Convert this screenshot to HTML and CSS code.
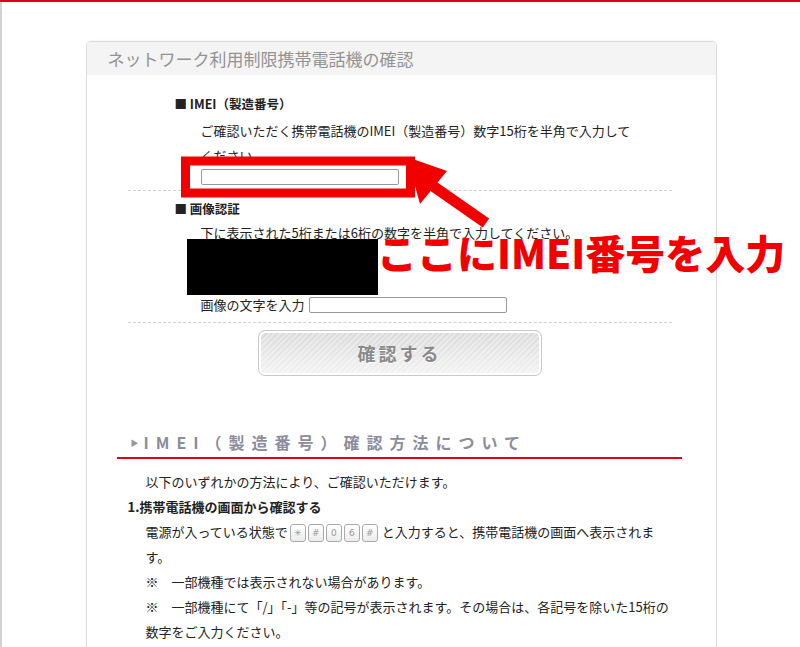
FILE: index.html
```html
<!DOCTYPE html>
<html lang="ja">
<head>
    <meta http-equiv="Content-Type" content="text/html; charset=utf-8" />
    <title>ネットワーク利用制限携帯電話機の確認</title>
    <link rel="stylesheet" href="styles.css">
</head>
<body>
    <div class="topbar"></div>
    <div class="page">
        <div class="card">
            <h1 class="card-head">ネットワーク利用制限携帯電話機の確認</h1>

            <form class="check-form" onsubmit="return false;">
                <div class="field">
                    <h2 class="field-title">■ IMEI（製造番号）</h2>
                    <p class="field-text">ご確認いただく携帯電話機のIMEI（製造番号）数字15桁を半角で入力してください</p>
                    <input class="imei-input" type="text">
                </div>
                <div class="field field-captcha">
                    <h2 class="field-title">■ 画像認証</h2>
                    <p class="field-text captcha-note">下に表示された5桁または6桁の数字を半角で入力してください。</p>
                    <div class="captcha"></div>
                    <div class="captcha-row">
                        <label for="captchaInput">画像の文字を入力</label>
                        <input id="captchaInput" class="captcha-input" type="text">
                    </div>
                </div>
                <div class="submit-row">
                    <button class="submit-btn" type="submit">確認する</button>
                </div>
            </form>

            <section class="howto">
                <h2 class="howto-title">IMEI（製造番号）確認方法について</h2>
                <p>以下のいずれかの方法により、ご確認いただけます。</p>
                <p class="howto-sub">1.携帯電話機の画面から確認する</p>
                <p>電源が入っている状態で<span class="key">&#x2733;</span><span class="key">#</span><span class="key">0</span><span class="key">6</span><span class="key key-last">#</span>と入力すると、携帯電話機の画面へ表示されます。</p>
                <p>※　一部機種では表示されない場合があります。</p>
                <p>※　一部機種にて「/」「-」等の記号が表示されます。その場合は、各記号を除いた15桁の数字をご入力ください。</p>
            </section>
        </div>
    </div>

    <!-- 注釈 -->
    <svg class="annot" width="800" height="647" viewBox="0 0 800 647">
        <rect x="185.5" y="161" width="225" height="32" fill="none" stroke="#f20000" stroke-width="9"/>
        <line x1="486" y1="223" x2="430" y2="184" stroke="#f20000" stroke-width="11"/>
        <polygon points="407,157 447,171 420,204" fill="#f20000"/>
    </svg>
    <div class="annot-text">ここにIMEI番号を入力</div>
</body>
</html>
```

FILE: styles.css
```css
body {
    margin: 0;
    background-color: #fff;
    color: #222;
    font-family: "Noto Sans CJK JP", sans-serif;
}

.topbar {
    height: 2px;
    background-color: #d9001b;
}

.page {
    border-left: 2px solid #d4d4d4;
    height: 645px;
    overflow: hidden;
}

.card {
    width: 629px;
    min-height: 700px;
    margin: 39px auto 0;
    border: 1px solid #dcdcdc;
    border-radius: 5px 5px 0 0;
    box-shadow: 0 -1px 2px rgba(0, 0, 0, 0.04);
}

.card-head {
    margin: 0;
    height: 33px;
    padding-left: 21px;
    line-height: 33px;
    font-size: 17px;
    font-weight: normal;
    color: #939393;
    background-color: #f4f4f4;
    border-radius: 4px 4px 0 0;
}

/* フォーム */
.check-form {
    margin: 0 44px 0 41px;
    padding-top: 16px;
}

.field {
    padding-bottom: 5px;
}

.field + .field {
    border-top: 1px dashed #cfcfcf;
    padding-top: 5px;
    padding-bottom: 9px;
}

.field-captcha + .submit-row {
    border-top: 1px dashed #cfcfcf;
}

.field-title {
    margin: 0;
    padding-left: 47px;
    font-size: 12.5px;
    font-weight: bold;
    line-height: 25px;
}

.field-text {
    width: 436px;
    margin: 2px 0 0;
    padding-left: 73px;
    font-size: 13px;
    line-height: 25px;
}

.imei-input,
.captcha-input {
    width: 198px;
    height: 16px;
    box-sizing: border-box;
    padding: 0;
    border: 1px solid #999;
    border-radius: 2px;
}

.imei-input {
    display: block;
    margin: 1px 0 0 73px;
}

.captcha-note {
    width: auto;
    margin-top: 3px;
    line-height: 18px;
}

.captcha {
    width: 191px;
    height: 56px;
    margin: -3px 0 0 59px;
    background-color: #000;
}

.captcha-row {
    display: flex;
    align-items: center;
    gap: 4px;
    height: 17px;
    margin: 1px 0 0 73px;
    font-size: 13px;
}

.submit-row {
    display: flex;
    justify-content: center;
    padding-top: 7px;
}

.submit-btn {
    width: 284px;
    height: 46px;
    border: 1px solid #c8c8c8;
    border-radius: 7px;
    box-shadow: inset 0 0 0 2px #fff;
    background:
        repeating-linear-gradient(135deg, rgba(255, 255, 255, 0.35) 0 2px, rgba(255, 255, 255, 0) 2px 4px),
        linear-gradient(#d9d9d9, #f3f3f3);
    font-family: "Noto Sans CJK JP", sans-serif;
    font-size: 18px;
    font-weight: bold;
    letter-spacing: 3px;
    color: #8a8a8a;
    text-shadow: 0 1px 0 #fff;
    cursor: pointer;
}

/* 確認方法 */
.howto {
    margin: 54px 34px 0 30px;
}

.howto-title {
    margin: 0 0 10px;
    padding: 0 0 2px 14px;
    border-bottom: 2px solid #e60012;
    font-size: 16px;
    font-weight: bold;
    line-height: 24px;
    letter-spacing: 7px;
    color: #8c8c9b;
}

.howto-title::before {
    content: "▶";
    margin-right: 5px;
    font-size: 8px;
    letter-spacing: 0;
    color: #999;
    vertical-align: 3px;
}

.howto p {
    margin: 0;
    padding-left: 29px;
    padding-right: 6px;
    font-size: 13px;
    line-height: 25px;
}

.howto .howto-sub {
    padding-left: 11px;
    font-weight: bold;
}

.key {
    display: inline-block;
    width: 14px;
    height: 16px;
    margin-left: 2px;
    border: 1px solid #aaa;
    border-radius: 3px;
    background: linear-gradient(#fff, #ececec);
    font-family: "DejaVu Sans", sans-serif;
    font-size: 9px;
    line-height: 16px;
    text-align: center;
    vertical-align: middle;
    color: #999;
}

.key-last {
    margin-right: 4px;
}

/* 注釈 */
.annot {
    position: absolute;
    top: 0;
    left: 0;
    pointer-events: none;
}

.annot-text {
    position: absolute;
    top: 232px;
    left: 377px;
    font-size: 40px;
    font-weight: 900;
    line-height: 40px;
    color: #f20000;
    white-space: nowrap;
}
```
